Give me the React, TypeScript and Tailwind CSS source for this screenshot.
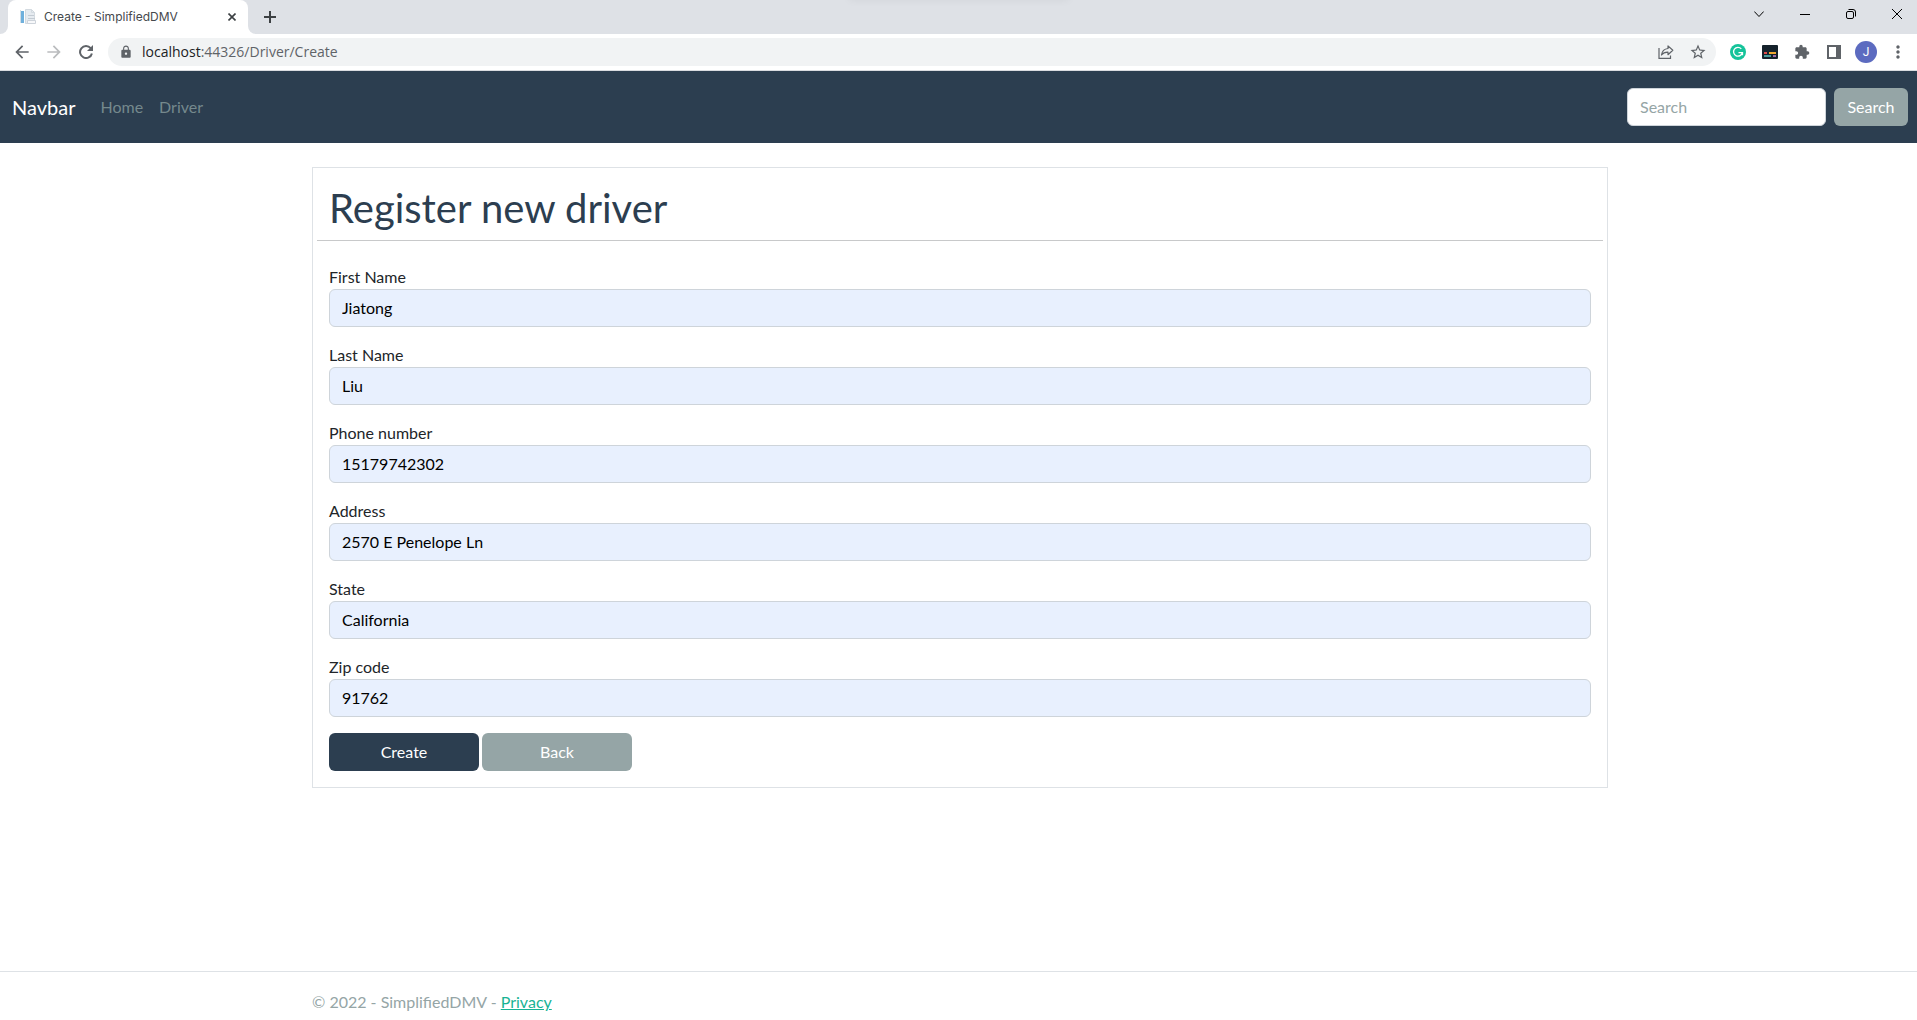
import { useState } from "react";
import {
  MdArrowBack,
  MdArrowForward,
  MdExtension,
  MdLock,
  MdMoreVert,
  MdStarBorder,
} from "react-icons/md";

const fields = [
  { id: "firstName", label: "First Name", value: "Jiatong" },
  { id: "lastName", label: "Last Name", value: "Liu" },
  { id: "phone", label: "Phone number", value: "15179742302" },
  { id: "address", label: "Address", value: "2570 E Penelope Ln" },
  { id: "state", label: "State", value: "California" },
  { id: "zip", label: "Zip code", value: "91762" },
];

function Favicon() {
  return (
    <svg width="16" height="16" viewBox="0 0 16 16" className="shrink-0" aria-hidden="true">
      <rect x="1" y="2" width="3" height="12" fill="#6fb0dc" />
      <rect x="0" y="1" width="1" height="13" fill="#d3dee6" />
      <path d="M5.500 .5h6l3 3v11h-9z" fill="#e6ebf0" stroke="#d3dae0" strokeWidth="1" />
      <path d="M11.500 .5v3h3" fill="none" stroke="#d3dae0" />
      <path d="M8 6.500h6M8 9.500h7" stroke="#c3cbd3" />
      <path d="M7.500 11.500h8v3h-8z" fill="#f7f8fa" stroke="#cdd3da" />
    </svg>
  );
}

function TabStrip() {
  return (
    <div className="relative flex h-[34px] items-end overflow-hidden bg-[#dee1e6]">
      <div className="absolute -top-2 left-1/2 h-2 w-[220px] -translate-x-1/2 shadow-[0_0_8px_rgba(0,0,0,0.06)]" />
      <div className="h-2 w-2 bg-white">
        <div className="h-2 w-2 rounded-br-lg bg-[#dee1e6]" />
      </div>
      <div className="flex h-full w-60 items-center rounded-t-lg bg-white pr-3 pl-3">
        <Favicon />
        <span className="ml-2 flex-1 font-[Inter,sans-serif] text-[12px] leading-4 whitespace-nowrap text-[#45494d]">
          Create - SimplifiedDMV
        </span>
        <button type="button" aria-label="Close tab">
          <svg width="8" height="8" viewBox="0 0 8 8" stroke="#3c4043" strokeWidth="1.600">
            <path d="M0.500 0.500l7 7M7.500 0.500l-7 7" />
          </svg>
        </button>
      </div>
      <div className="h-2 w-2 bg-white">
        <div className="h-2 w-2 rounded-bl-lg bg-[#dee1e6]" />
      </div>
      <button type="button" aria-label="New tab" className="ml-2 flex h-full items-center">
        <svg width="12" height="12" viewBox="0 0 12 12" stroke="#3c4043" strokeWidth="2">
          <path d="M6 0v12M0 6h12" />
        </svg>
      </button>
      <div className="ml-auto flex h-full items-start gap-9 pt-[9px] pr-[15px] text-black">
        <button type="button" aria-label="Search tabs">
          <svg width="10" height="10" viewBox="0 0 10 10" fill="none" stroke="currentColor">
            <path d="M0.300 2.500L5 7.500l4.700-5" />
          </svg>
        </button>
        <button type="button" aria-label="Minimize">
          <svg width="10" height="10" viewBox="0 0 10 10" stroke="currentColor">
            <path d="M0 5.500h10" />
          </svg>
        </button>
        <button type="button" aria-label="Restore">
          <svg width="10" height="10" viewBox="0 0 10 10" fill="none" stroke="currentColor">
            <rect x="0.500" y="2.500" width="7" height="7" rx="1.500" />
            <path d="M2.500 .5h4.500a2.500 2.500 0 0 1 2.500 2.500v4.500" />
          </svg>
        </button>
        <button type="button" aria-label="Close window">
          <svg width="10" height="10" viewBox="0 0 10 10" stroke="currentColor">
            <path d="M0 0l10 10M10 0L0 10" />
          </svg>
        </button>
      </div>
    </div>
  );
}

const cell = "flex h-7 w-8 shrink-0 items-center justify-center";

function Toolbar() {
  return (
    <div className="flex h-[37px] items-center border-b border-[#dadce0] bg-white pr-[3px] pl-[6px] text-[#5f6368]">
      <button type="button" aria-label="Back" className={cell}>
        <MdArrowBack size={20} />
      </button>
      <button type="button" aria-label="Forward" className={`${cell} text-[#babcbe]`}>
        <MdArrowForward size={20} />
      </button>
      <button type="button" aria-label="Reload" className={cell}>
        <svg width="14" height="14" viewBox="0 0 14 14" fill="none">
          <path d="M11.700 3.200A6 6 0 1 0 12.900 8.400" stroke="currentColor" strokeWidth="2" />
          <path d="M14 0v6H8z" fill="currentColor" />
        </svg>
      </button>
      <div className="mx-[6px] flex h-7 flex-1 items-center rounded-full bg-[#f1f3f4] pr-[2px] pl-[11px]">
        <MdLock size={14} />
        <span className="ml-[9px] flex-1 font-['Open_Sans',sans-serif] text-[14px] leading-5">
          <span className="text-[#202124]">localhost</span>:44326/Driver/Create
        </span>
        <button type="button" aria-label="Share" className={cell}>
          <svg width="16" height="14" viewBox="0 0 16 14" fill="none" stroke="currentColor" strokeWidth="1.200">
            <path d="M1 3v10.400h11.500V10.500" />
            <path d="M10 .9l4.800 4.400L10 9.700V7.200C7 7.100 5 8 3.500 10 4 6.500 6 3.900 10 3.500z" strokeLinejoin="round" />
          </svg>
        </button>
        <button type="button" aria-label="Bookmark" className={cell}>
          <MdStarBorder size={18} />
        </button>
      </div>
      <button type="button" aria-label="Grammarly" className={cell}>
        <svg width="16" height="16" viewBox="0 0 16 16" fill="none">
          <circle cx="8" cy="8" r="8" fill="#15c39a" />
          <path d="M11.300 4.900A4.400 4.400 0 1 0 12.300 8.600" stroke="#fff" strokeWidth="1.300" />
          <path d="M8.500 8.600h4v2.600" stroke="#fff" strokeWidth="1.300" />
        </svg>
      </button>
      <button type="button" aria-label="Subtitles" className={cell}>
        <svg width="16" height="14" viewBox="0 0 16 14">
          <rect width="16" height="14" rx="1" fill="#15222b" />
          <rect x="2" y="7" width="3" height="2" fill="#e04b4b" />
          <rect x="7" y="7" width="7" height="2" fill="#f0a830" />
          <rect x="2" y="10" width="7" height="2" fill="#4a9a9a" />
          <rect x="11" y="10" width="3" height="2" fill="#a06aa8" />
        </svg>
      </button>
      <button type="button" aria-label="Extensions" className={cell}>
        <MdExtension size={16} />
      </button>
      <button type="button" aria-label="Side panel" className={cell}>
        <svg width="14" height="14" viewBox="0 0 14 14">
          <path d="M0 0h14v14H0zM2 2v10h7V2z" fill="currentColor" fillRule="evenodd" />
        </svg>
      </button>
      <button type="button" aria-label="Profile" className={cell}>
        <span className="flex h-[22px] w-[22px] items-center justify-center rounded-full bg-[#5c6bc0] font-[Roboto,sans-serif] text-[12px] leading-none text-white">
          J
        </span>
      </button>
      <button type="button" aria-label="Menu" className={cell}>
        <MdMoreVert size={20} />
      </button>
    </div>
  );
}

function Navbar() {
  return (
    <nav className="flex min-h-[72px] items-center bg-[#2c3e50] pr-[9px] pl-3">
      <a href="#" className="mr-[17px] text-[20px] leading-[30px] text-white">
        Navbar
      </a>
      <a href="#" className="px-2 text-[#75898d]">
        Home
      </a>
      <a href="#" className="px-2 text-[#75898d]">
        Driver
      </a>
      <form className="ml-auto flex gap-2" onSubmit={(e) => e.preventDefault()}>
        <input
          type="search"
          aria-label="Search"
          placeholder="Search"
          className="h-[38px] w-[199px] rounded-md border border-[#ced4da] bg-white px-3 pb-[2px] text-[#212529] placeholder:text-[#95a5a6]"
        />
        <button type="submit" className="h-[38px] w-[74px] rounded-md bg-[#95a5a6] text-white">
          Search
        </button>
      </form>
    </nav>
  );
}

function DriverForm() {
  const [values, setValues] = useState<Record<string, string>>(
    Object.fromEntries(fields.map((f) => [f.id, f.value])),
  );
  return (
    <form className="border border-[#dee2e6] px-1 pt-4 pb-4" onSubmit={(e) => e.preventDefault()}>
      <h1 className="px-3 pb-2 text-[40px] leading-[48px] text-[#2c3e50]">Register new driver</h1>
      <hr className="mb-6 border-[#c8c9ca]" />
      <div className="flex flex-col gap-4 px-3">
        {fields.map((f) => (
          <div key={f.id}>
            <label htmlFor={f.id} className="block">
              {f.label}
            </label>
            <input
              id={f.id}
              type="text"
              value={values[f.id]}
              onChange={(e) => setValues({ ...values, [f.id]: e.target.value })}
              className="block h-[38px] w-full rounded-md border border-[#ced4da] bg-[#e8f0fe] px-3 pb-[2px] text-black"
            />
          </div>
        ))}
        <div className="flex gap-[3px] text-white">
          <button type="submit" className="h-[38px] w-[150px] rounded-md bg-[#2c3e50]">
            Create
          </button>
          <button type="button" className="h-[38px] w-[150px] rounded-md bg-[#95a5a6]">
            Back
          </button>
        </div>
      </div>
    </form>
  );
}

export default function App() {
  return (
    <div className="flex min-h-screen flex-col bg-white font-[Lato,sans-serif] text-[16px] leading-6 text-[#212529]">
      <header>
        <TabStrip />
        <Toolbar />
        <Navbar />
      </header>
      <main className="flex-1 pt-6 pl-[3px]">
        <div className="mx-auto max-w-[1320px] px-3">
          <DriverForm />
        </div>
      </main>
      <footer className="border-t border-[#dee2e6] pl-[3px] text-[#95a5a6]">
        <div className="mx-auto max-w-[1320px] px-3 pt-[18px] pb-[6px]">
          © 2022 - SimplifiedDMV -{" "}
          <a href="#" className="text-[#18b394] underline">
            Privacy
          </a>
        </div>
      </footer>
    </div>
  );
}
